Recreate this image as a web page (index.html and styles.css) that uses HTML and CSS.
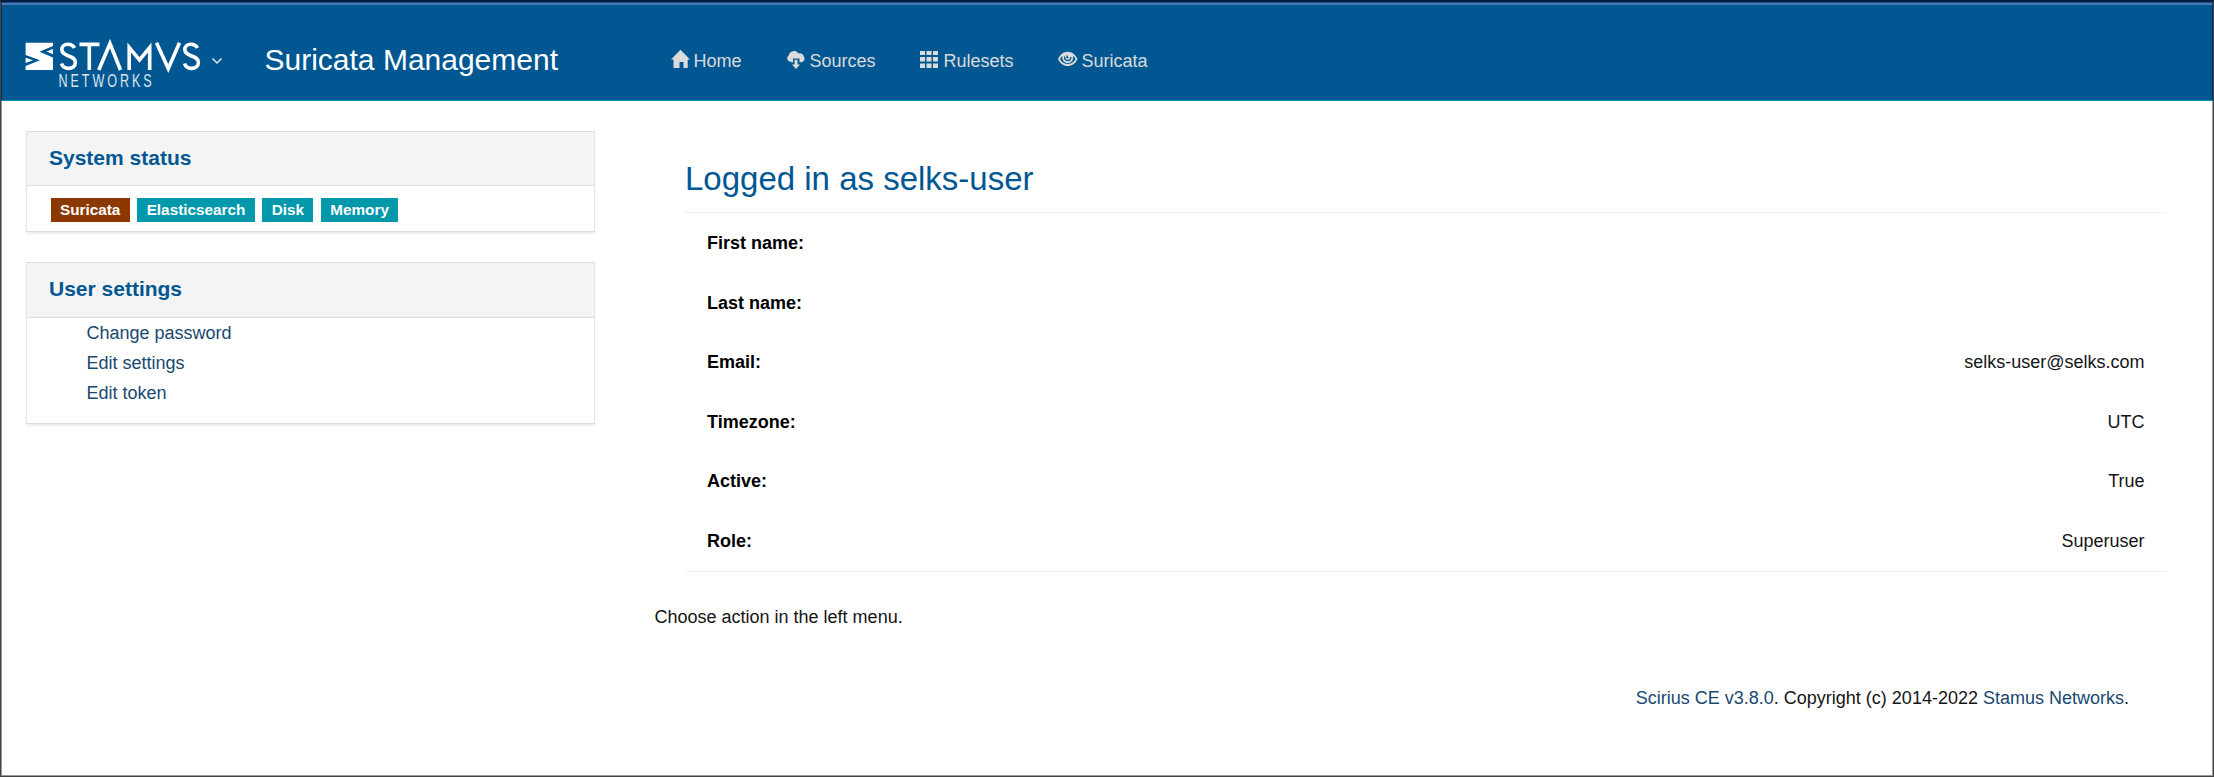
FILE: index.html
```html
<!DOCTYPE html>
<html lang="en">
<head>
<meta charset="utf-8">
<title>Suricata Management</title>
<link rel="stylesheet" href="styles.css">
</head>
<body>
<div class="window">
  <header class="navbar">
    <a class="brand">
      <svg class="logo" width="176" height="50" viewBox="0 0 176 50" role="img" aria-label="Stamus Networks">
        <path fill="#fff" d="M.6 3.700H28V7L14.500 12.700 28 18.500V31H.6V27L15 21.300.6 16z"/>
        <path fill="#fff" d="M28 10v5.200l-6.500-2.600zM.6 18.700V24L8 21.300z"/>
        <g fill="none" stroke="#fff" stroke-width="3.600">
          <path d="M49.500 9c-1.500-2.800-4-3.700-6.500-3.700-4 0-6.200 2.200-6.200 5.200 0 7.500 13.600 5.500 13.600 12.700 0 4-3 6.200-6.900 6.200-3.500 0-6-1.500-7-4.800"/>
          <path stroke-miterlimit="10" d="M54.500 5.400h20M64.300 5v26M73.800 31L85 4.500 95.500 31M104.200 31V8.500l10.300 12.500 10.200-12.500V31M131.500 3.700L143.300 29.500 154.500 3.700"/>
          <path d="M172.500 9c-1.500-2.800-4-3.700-6.500-3.700-4 0-6.200 2.200-6.200 5.200 0 7.500 13.600 5.500 13.600 12.700 0 4-3 6.200-6.900 6.200-3.500 0-6-1.500-7-4.800"/>
        </g>
        <text class="logo-sub" transform="translate(33.500 48) scale(.68 1)" textLength="137" lengthAdjust="spacing">NETWORKS</text>
      </svg>
      <svg class="caret" width="12" height="8" viewBox="0 0 12 8"><path d="M1.500 1.500L6 6l4.500-4.500" fill="none" stroke="#e4e9ee" stroke-width="1.500"/></svg>
    </a>
    <span class="title">Suricata Management</span>
    <nav class="menu">
      <a class="menu-item home"><svg width="20" height="20" viewBox="0 0 20 20"><path fill="currentColor" d="M9.500 .8L19 10.500h-2.300V19h-4.200v-6h-4v6H2.500v-8.500H0z"/></svg>Home</a>
      <a class="menu-item sources"><svg width="20" height="20" viewBox="0 0 20 20"><path fill="currentColor" d="M4 12.800A3.500 3.500 0 0 1 2.600 6.500 5.500 5.500 0 0 1 12.500 4.500 4.300 4.300 0 0 1 18 8 3.300 3.300 0 0 1 15.500 13.200H13.500V9.500H7v4z"/><path fill="currentColor" d="M8.500 10.800h3v4.700h2.500L10 20l-4-4.500h2.500z"/></svg>Sources</a>
      <a class="menu-item rulesets"><svg width="18" height="20" viewBox="0 0 18 20"><path fill="currentColor" d="M0 2h5v4H0zM6.500 2h5v4h-5zM13 2h5v4h-5zM0 8h5v4.500H0zM6.500 8h5v4.500h-5zM13 8h5v4.500h-5zM0 14.500h5V19H0zM6.500 14.500h5V19h-5zM13 14.500h5V19h-5z"/></svg>Rulesets</a>
      <a class="menu-item suricata"><svg width="20" height="20" viewBox="0 0 20 20"><path fill="currentColor" fill-rule="evenodd" d="M0 10C2 5.500 5.500 2.700 9.700 2.700S17.500 5.500 19.500 10c-2 4.500-5.600 7-9.800 7S2 14.500 0 10zM2 10c1.800 3.300 4.500 5 7.700 5s6-1.700 7.800-5c-.6-1.300-1.500-2.400-2.600-3.300a5.500 5.500 0 1 1-10.300 0C3.500 7.600 2.700 8.700 2 10z"/><circle cx="9.700" cy="8.500" r="5.200" fill="currentColor"/><path fill="none" stroke="#005792" stroke-width="1.300" d="M6.500 7.500c0 2.500 1.300 4 3.200 4s3.200-1.500 3.200-3.500M9 6.500v2h1.500"/></svg>Suricata</a>
    </nav>
  </header>
  <div class="content">
    <aside class="sidebar">
      <section class="panel status">
        <h2 class="panel-heading">System status</h2>
        <div class="labels"><span class="label danger">Suricata</span><span class="label">Elasticsearch</span><span class="label">Disk</span><span class="label">Memory</span></div>
      </section>
      <section class="panel">
        <h2 class="panel-heading">User settings</h2>
        <ul class="links"><li><a>Change password</a></li><li><a>Edit settings</a></li><li><a>Edit token</a></li></ul>
      </section>
    </aside>
    <main class="main">
      <section class="profile">
        <h1 class="page-title">Logged in as selks-user</h1>
        <dl class="details">
          <div class="row"><dt>First name:</dt><dd></dd></div>
          <div class="row"><dt>Last name:</dt><dd></dd></div>
          <div class="row"><dt>Email:</dt><dd>selks-user@selks.com</dd></div>
          <div class="row"><dt>Timezone:</dt><dd>UTC</dd></div>
          <div class="row"><dt>Active:</dt><dd>True</dd></div>
          <div class="row"><dt>Role:</dt><dd>Superuser</dd></div>
        </dl>
      </section>
      <p class="hint">Choose action in the left menu.</p>
      <footer class="footer"><a>Scirius CE v3.8.0</a>. Copyright (c) 2014-2022 <a>Stamus Networks</a>.</footer>
    </main>
  </div>
</div>
</body>
</html>
```

FILE: styles.css
```css
* { box-sizing: border-box; }
body { margin: 0; font: 18px/30px "Liberation Sans", Arial, sans-serif; color: #151515; background: #fff; }
h1, h2, p, ul, dl, dd { margin: 0; padding: 0; }
a { color: #18486f; text-decoration: none; }
.window { position: relative; height: 777px; border: 1px solid #444; border-top: 2px solid #061c3c; overflow: hidden; }
.window::after { content: ""; position: absolute; inset: 0; border: 1px solid rgba(0,0,0,.4); border-top: 0; pointer-events: none; }
.navbar { display: flex; align-items: flex-start; height: 99px; padding-top: 2px; border-bottom: 1px solid #0098aa; background: linear-gradient(#1c4f97 1px, #4a7ab2 1px, #4a7ab2 3px, #005792 3px); }
.brand { display: flex; width: 263.5px; padding: 35px 0 0 24px; }
.logo { flex: none; overflow: visible; }
.logo-sub { font: 18.5px "Liberation Sans", sans-serif; fill: #dce6ee; }
.caret { margin: 18px 0 0 9.5px; }
.title { width: 406.5px; padding-top: 41px; font-size: 30px; line-height: 30px; color: #fff; }
.menu { display: flex; padding-top: 41px; line-height: 32px; }
.menu-item { display: flex; color: #dbdbdb; }
.menu-item svg { margin: 4px 3px 0 0; }
.home { width: 114.5px; }
.home svg { margin-right: 2.5px; }
.sources { width: 134px; }
.sources svg { margin-right: 4px; }
.rulesets { width: 138px; }
.rulesets svg { margin-right: 6px; }
.suricata svg { margin-right: 4px; }
.content { display: flex; }
.sidebar { width: 594px; padding: 30px 0 0 25px; }
.panel { width: 569px; height: 162px; border: 1px solid #ddd; border-left-color: #e6e6e6; border-right-color: #e6e6e6; box-shadow: 0 2px 2px rgba(0,0,0,.07); }
.status { height: 101px; margin-bottom: 30px; }
.panel-heading { height: 55px; padding-left: 22px; border-bottom: 1px solid #ddd; background: #f4f4f4; color: #005792; font-size: 21px; line-height: 51px; }
.status .panel-heading { height: 54px; }
.labels { display: flex; gap: 7.3px; padding: 12px 0 0 23.5px; }
.label { height: 24px; padding: 0 9.5px; background: #0098aa; color: #fff; font-size: 15.3px; line-height: 24px; font-weight: bold; }
.danger { background: #8b3900; }
.links { padding-left: 59.5px; list-style: none; }
.main { flex: 1; padding: 30px 47px 0 59.5px; }
.profile { margin-left: 30.5px; }
.page-title { height: 82px; padding-top: 31px; border-bottom: 1px solid #eee; color: #005792; font-size: 33px; font-weight: normal; line-height: 33px; }
.details { height: 359px; border-bottom: 1px solid #f0f0f0; }
.row { display: flex; justify-content: space-between; height: 59.5px; padding: 15px 21.5px 15px 22px; }
dt { font-weight: bold; color: #000; }
.hint { padding-top: 30px; }
.footer { padding: 51px 37px 0 0; text-align: right; }
```
